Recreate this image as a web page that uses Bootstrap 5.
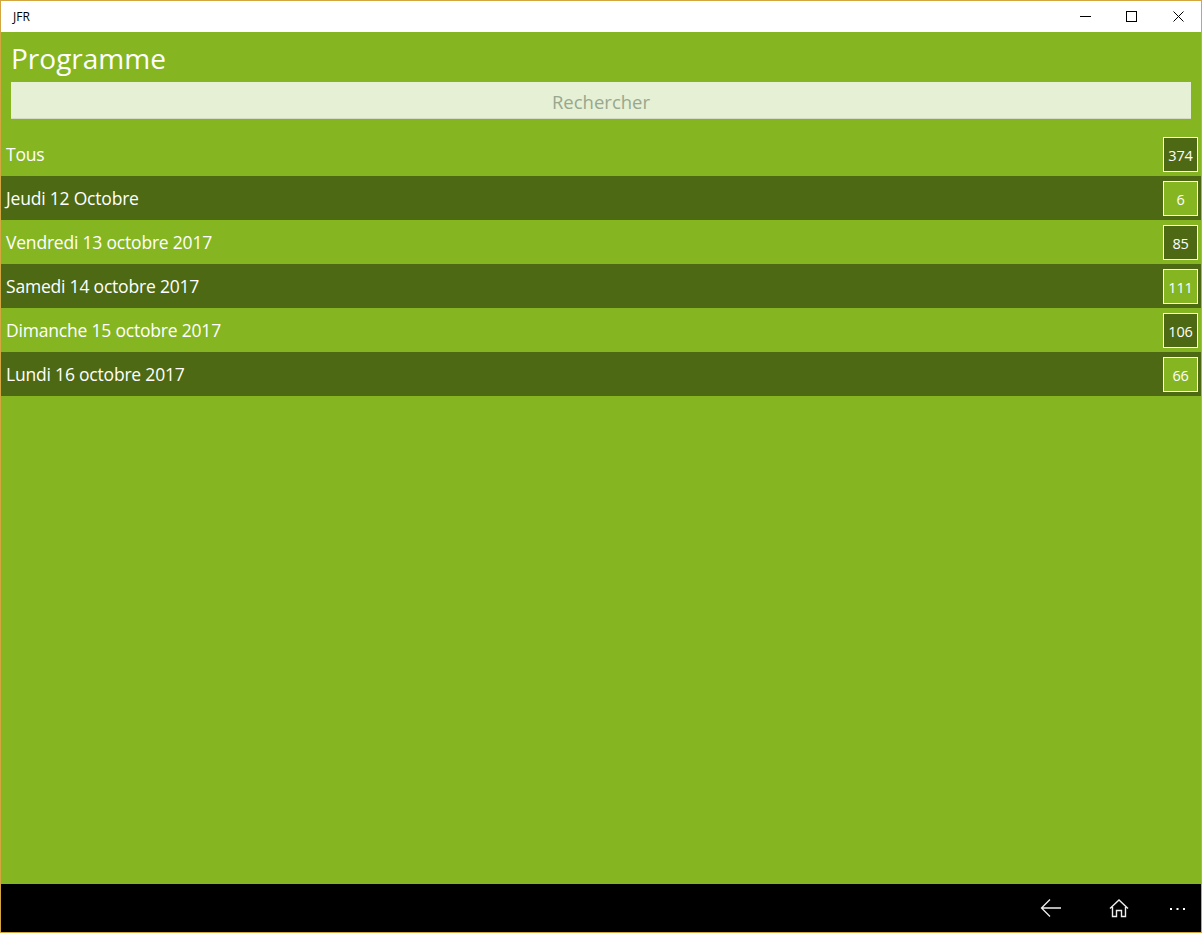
<!DOCTYPE html>
<html lang="fr">
<head>
<meta charset="utf-8">
<title>JFR</title>
<link rel="stylesheet" href="https://cdn.jsdelivr.net/npm/bootstrap@5.3.0/dist/css/bootstrap.min.css">
<style>
html,body{height:100%;margin:0}
body{font-family:"Open Sans","Noto Sans",sans-serif;background:#85b621;overflow:hidden}
.app-window{width:1202px;height:933px;border:1px solid #d4a63f;background:#85b621}
.title-strip{height:31px;background:#fff;color:#000;font-size:12px;padding-left:12px}
.win-btn{width:46px;height:31px}
.win-shift{margin-right:1px}
.page-head{padding:0 10px}
.page-title{font-size:28px;line-height:37px;color:#fff;margin:8px 0 5px;font-weight:400}
.search-field{height:37px;width:1180px;background:#e6f0d5;border-bottom:1px solid #d3dcc2;color:#98a78d;font-size:18.5px;line-height:39px;text-align:center}
.day-list{margin-top:13px}
.day-row{height:44px;padding:0 3px 0 5px;color:#fff;font-size:17.5px;letter-spacing:-.2px}
.day-odd{background:#85b621}
.day-even{background:#4d6913}
.day-count{width:35px;height:35px;border:1px solid #fff;font-size:14.5px;letter-spacing:-.2px;padding-top:3px}
.day-odd .day-count{background:#4d6913}
.day-even .day-count{background:#85b621}
.cmd-strip{height:48px;background:#000;color:#fff}
.cmd-btn{width:68px;height:48px}
.cmd-more{width:48px;height:48px;padding-top:1px}
.app-body{height:852px}
</style>
</head>
<body>
<div class="app-window d-flex flex-column">
  <div class="title-strip d-flex align-items-center justify-content-between">
    <span>JFR</span>
    <div class="d-flex">
      <div class="win-btn d-flex align-items-center justify-content-center"><svg width="11" height="11" viewBox="0 0 11 11"><path d="M0 5.5H11" stroke="#000" fill="none"/></svg></div>
      <div class="win-btn win-shift d-flex align-items-center justify-content-center"><svg width="11" height="11" viewBox="0 0 11 11"><rect x=".5" y=".5" width="10" height="10" stroke="#000" fill="none"/></svg></div>
      <div class="win-btn d-flex align-items-center justify-content-center"><svg width="11" height="11" viewBox="0 0 11 11"><path d="M.5 .5L10.5 10.5M10.5 .5L.5 10.5" stroke="#000" fill="none"/></svg></div>
    </div>
  </div>
  <div class="app-body flex-grow-1">
    <div class="page-head">
      <h1 class="page-title">Programme</h1>
      <div class="search-field">Rechercher</div>
    </div>
    <div class="day-list">
      <div class="day-row day-odd d-flex align-items-center justify-content-between"><span>Tous</span><span class="day-count d-flex align-items-center justify-content-center">374</span></div>
      <div class="day-row day-even d-flex align-items-center justify-content-between"><span>Jeudi 12 Octobre</span><span class="day-count d-flex align-items-center justify-content-center">6</span></div>
      <div class="day-row day-odd d-flex align-items-center justify-content-between"><span>Vendredi 13 octobre 2017</span><span class="day-count d-flex align-items-center justify-content-center">85</span></div>
      <div class="day-row day-even d-flex align-items-center justify-content-between"><span>Samedi 14 octobre 2017</span><span class="day-count d-flex align-items-center justify-content-center">111</span></div>
      <div class="day-row day-odd d-flex align-items-center justify-content-between"><span>Dimanche 15 octobre 2017</span><span class="day-count d-flex align-items-center justify-content-center">106</span></div>
      <div class="day-row day-even d-flex align-items-center justify-content-between"><span>Lundi 16 octobre 2017</span><span class="day-count d-flex align-items-center justify-content-center">66</span></div>
    </div>
  </div>
  <div class="cmd-strip d-flex align-items-center justify-content-end">
    <div class="cmd-btn d-flex align-items-center justify-content-center"><svg width="22" height="20" viewBox="0 0 22 20"><path d="M21 10H2M10 1.5L1.5 10L10 18.5" stroke="#eee" stroke-width="1.3" fill="none"/></svg></div>
    <div class="cmd-btn d-flex align-items-center justify-content-center"><svg width="20" height="19" viewBox="0 0 20 19"><path d="M1 9.5L10 1L19 9.5M3.5 8V17.5H7.5V11.5H12.5V17.5H16.5V8" stroke="#eee" stroke-width="1.4" fill="none"/></svg></div>
    <div class="cmd-more d-flex align-items-center justify-content-center"><svg width="15" height="2" viewBox="0 0 15 2"><rect x="0" y="0" width="2" height="2" fill="#fff"/><rect x="6.5" y="0" width="2" height="2" fill="#fff"/><rect x="13" y="0" width="2" height="2" fill="#fff"/></svg></div>
  </div>
</div>
</body>
</html>
